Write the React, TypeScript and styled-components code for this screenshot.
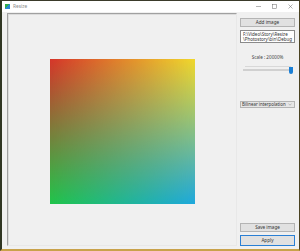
import React from "react";
import styled, { createGlobalStyle } from "styled-components";

const Global = createGlobalStyle`
  html, body { margin: 0; padding: 0; background: #f0f0f0; }
  body { font-family: "Noto Sans", "Liberation Sans", Arial, sans-serif; }
  * { box-sizing: border-box; }
`;

const Window = styled.div`
  width: 300px;
  height: 251px;
  display: flex;
  flex-direction: column;
  background: #f0f0f0;
  border-left: 2px solid #2f3522;
  border-right: 1px solid #4a4222;
  border-top: 1px solid #3a3a2a;
  border-bottom: 2px solid #c9a24a;
  overflow: hidden;
`;

const TitleBar = styled.div`
  height: 11px;
  flex: none;
  background: #ffffff;
  display: flex;
  align-items: center;
  padding-left: 3px;
  gap: 3px;
  font-size: 4.8px;
  color: #888;
`;

const AppIcon = styled.div`
  width: 5px;
  height: 5px;
  background: linear-gradient(135deg, #2fae4a 0%, #2fae4a 50%, #2a8ad0 50%);
`;

const Title = styled.span`
  flex: 1;
  line-height: 1;
`;

const Controls = styled.div`
  display: flex;
  align-items: center;
  gap: 11px;
  padding-right: 6px;
  color: #444;
`;

const Body = styled.div`
  flex: 1;
  display: flex;
  padding: 1px 4px 3px 5px;
  gap: 3px;
`;

const ImagePanel = styled.div`
  flex: 1;
  display: flex;
  align-items: center;
  justify-content: center;
  border: 1px solid #a0a0a0;
  border-right-color: #e8e8e8;
  border-bottom-color: #e8e8e8;
  box-shadow: inset 1px 1px 0 #dcdcdc;
  padding-top: 4px;
`;

const GradientSquare = styled.div`
  position: relative;
  width: 145px;
  height: 145px;
  background: linear-gradient(to bottom, #d6352a, #20c54a);
  &::after {
    content: "";
    position: absolute;
    inset: 0;
    background: linear-gradient(to bottom, #f0d82c, #1ea8de);
    -webkit-mask-image: linear-gradient(to right, transparent, #000);
    mask-image: linear-gradient(to right, transparent, #000);
  }
`;

const Sidebar = styled.div`
  width: 55px;
  flex: none;
  display: flex;
  flex-direction: column;
  padding-top: 5px;
`;

const Button = styled.div<{ $primary?: boolean }>`
  height: ${(p) => (p.$primary ? "11px" : "9px")};
  display: flex;
  align-items: center;
  justify-content: center;
  background: #e1e1e1;
  border: 1px solid ${(p) => (p.$primary ? "#2a7fd4" : "#b4b4b4")};
  font-size: 4.6px;
  color: #333;
  line-height: 1;
`;

const PathBox = styled.div`
  margin-top: 3px;
  height: 13px;
  background: #ffffff;
  border: 1px solid #8a8a8a;
  padding: 1px 1px 0 2px;
  font-size: 4.5px;
  line-height: 5.2px;
  color: #333;
  white-space: nowrap;
  overflow: hidden;
`;

const ScaleLabel = styled.div`
  margin-top: 12px;
  text-align: center;
  font-size: 4.6px;
  line-height: 5px;
  color: #444;
`;

const Slider = styled.div`
  position: relative;
  margin-top: 5px;
  height: 10px;
`;

const TickLine = styled.div`
  position: absolute;
  left: 5px;
  right: 4px;
  top: 1px;
  height: 1px;
  background: #d8d8d8;
`;

const Track = styled.div`
  position: absolute;
  left: 3px;
  right: 2px;
  top: 4px;
  height: 2px;
  background: #dcdcdc;
  border: 1px solid #d0d0d0;
`;

const Thumb = styled.div`
  position: absolute;
  right: 2px;
  top: 2px;
  width: 4px;
  height: 7px;
  background: #1a7fd6;
  border-radius: 0 0 2px 2px;
`;

const Select = styled.div`
  margin-top: 26px;
  height: 7px;
  display: flex;
  align-items: center;
  justify-content: space-between;
  background: #e6e6e6;
  border: 1px solid #b4b4b4;
  padding: 0 2px 0 1px;
  font-size: 4.4px;
  color: #333;
  line-height: 1;
`;

const Spacer = styled.div`
  flex: 1;
`;

const Gap = styled.div`
  height: 3px;
`;

export default function App() {
  return (
    <>
      <Global />
      <Window>
        <TitleBar>
          <AppIcon />
          <Title>Resize</Title>
          <Controls>
            <svg width="5" height="5" viewBox="0 0 5 5">
              <line x1="0" y1="2.5" x2="5" y2="2.5" stroke="#666" strokeWidth="0.5" />
            </svg>
            <svg width="5" height="5" viewBox="0 0 5 5">
              <rect x="0.5" y="0.5" width="4" height="4" fill="none" stroke="#666" strokeWidth="0.5" />
            </svg>
            <svg width="5" height="5" viewBox="0 0 5 5">
              <path d="M0.5 0.5 L4.5 4.5 M4.5 0.5 L0.5 4.5" stroke="#666" strokeWidth="0.5" />
            </svg>
          </Controls>
        </TitleBar>
        <Body>
          <ImagePanel>
            <GradientSquare />
          </ImagePanel>
          <Sidebar>
            <Button>Add image</Button>
            <PathBox>
              F:\Video\Story\Resize
              <br />
              \Photostory\bin\Debug
            </PathBox>
            <ScaleLabel>Scale : 20000%</ScaleLabel>
            <Slider>
              <TickLine />
              <Track />
              <Thumb />
            </Slider>
            <Select>
              <span>Bilinear interpolation</span>
              <svg width="4" height="3" viewBox="0 0 4 3">
                <path d="M0.5 0.8 L2 2.2 L3.5 0.8" fill="none" stroke="#888" strokeWidth="0.5" />
              </svg>
            </Select>
            <Spacer />
            <Button>Save image</Button>
            <Gap />
            <Button $primary>Apply</Button>
          </Sidebar>
        </Body>
      </Window>
    </>
  );
}
